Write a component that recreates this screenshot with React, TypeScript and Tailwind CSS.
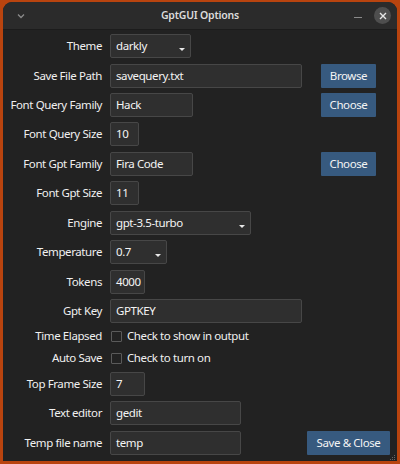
import React from "react";

type Field =
  | { kind: "entry"; value: string; w: string }
  | { kind: "combo"; value: string; w: string }
  | { kind: "check"; value: string };

type Row = {
  label: string;
  field: Field;
  button?: string;
  h: string;
  mt: string;
};

const rows: Row[] = [
  { label: "Theme", field: { kind: "combo", value: "darkly", w: "w-[81px]" }, h: "h-[24px]", mt: "mt-[4px]" },
  { label: "Save File Path", field: { kind: "entry", value: "savequery.txt", w: "w-[192px]" }, button: "Browse", h: "h-[24px]", mt: "mt-[6px]" },
  { label: "Font Query Family", field: { kind: "entry", value: "Hack", w: "w-[83px]" }, button: "Choose", h: "h-[24px]", mt: "mt-[5px]" },
  { label: "Font Query Size", field: { kind: "entry", value: "10", w: "w-[29px]" }, h: "h-[24px]", mt: "mt-[5px]" },
  { label: "Font Gpt Family", field: { kind: "entry", value: "Fira Code", w: "w-[83px]" }, button: "Choose", h: "h-[24px]", mt: "mt-[6px]" },
  { label: "Font Gpt Size", field: { kind: "entry", value: "11", w: "w-[29px]" }, h: "h-[24px]", mt: "mt-[5px]" },
  { label: "Engine", field: { kind: "combo", value: "gpt-3.5-turbo", w: "w-[141px]" }, h: "h-[24px]", mt: "mt-[6px]" },
  { label: "Temperature", field: { kind: "combo", value: "0.7", w: "w-[57px]" }, h: "h-[24px]", mt: "mt-[5px]" },
  { label: "Tokens", field: { kind: "entry", value: "4000", w: "w-[35px]" }, h: "h-[24px]", mt: "mt-[6px]" },
  { label: "Gpt Key", field: { kind: "entry", value: "GPTKEY", w: "w-[192px]" }, h: "h-[24px]", mt: "mt-[5px]" },
  { label: "Time Elapsed", field: { kind: "check", value: "Check to show in output" }, h: "h-[22px]", mt: "mt-[2px]" },
  { label: "Auto Save", field: { kind: "check", value: "Check to turn on" }, h: "h-[22px]", mt: "mt-0" },
  { label: "Top Frame Size", field: { kind: "entry", value: "7", w: "w-[35px]" }, h: "h-[24px]", mt: "mt-[3px]" },
  { label: "Text editor", field: { kind: "entry", value: "gedit", w: "w-[131px]" }, h: "h-[24px]", mt: "mt-[5px]" },
  { label: "Temp file name", field: { kind: "entry", value: "temp", w: "w-[131px]" }, button: "Save & Close", h: "h-[24px]", mt: "mt-[6px]" },
];

function FieldBox({ field }: { field: Field }) {
  if (field.kind === "check") {
    return (
      <div className="flex items-center gap-[5px] pl-[1px]">
        <div className="w-[11px] h-[11px] border border-[#5a5a5a] rounded-[1px]" />
        <span className="text-[#f0f0f0]">{field.value}</span>
      </div>
    );
  }
  return (
    <div
      className={`relative ${field.w} h-full flex items-center pl-[5px] bg-[#2f2f2f] border border-[#474747] rounded-[2px] text-[#f4f4f4]`}
    >
      {field.value}
      {field.kind === "combo" && (
        <div className="absolute right-[5px] bottom-[6px] w-0 h-0 border-l-[3px] border-r-[3px] border-t-[3px] border-l-transparent border-r-transparent border-t-[#e8e8e8]" />
      )}
    </div>
  );
}

export default function App() {
  return (
    <div className="w-[400px] h-[464px] bg-[#b9440f] pt-[2px] px-[3px] pb-[3px] font-['Noto_Sans',sans-serif] text-[11.5px] tracking-[-0.4px]">
      <div className="w-full h-full flex flex-col bg-[#222222] rounded-t-[9px] overflow-hidden">
        {/* title bar */}
        <div className="relative h-[28px] shrink-0 flex items-center justify-center bg-[#2b2b2b] border-b border-[#1c1c1c]">
          <svg className="absolute left-[13px] top-[10px]" width="10" height="8" viewBox="0 0 10 8">
            <path d="M2 2.5 L5 5.5 L8 2.5" stroke="#8a8a8a" strokeWidth="1.3" fill="none" />
          </svg>
          <span className="font-semibold text-[10.5px] tracking-[-0.2px] text-[#dcdcdc]">GptGUI Options</span>
          <div className="absolute left-[351px] top-[15px] w-[8px] h-[1px] bg-[#8a8a8a]" />
          <div className="absolute left-[371px] top-[5px] w-[17px] h-[17px] rounded-full bg-[#4e4e4e] flex items-center justify-center">
            <svg width="8" height="8" viewBox="0 0 8 8">
              <path d="M1 1 L7 7 M7 1 L1 7" stroke="#e6e6e6" strokeWidth="1.4" />
            </svg>
          </div>
        </div>

        {/* form */}
        <div className="flex flex-col">
          {rows.map((r) => (
            <div key={r.label} className={`flex items-center ${r.h} ${r.mt}`}>
              <div className="w-[99px] text-right text-[#f0f0f0] whitespace-nowrap">{r.label}</div>
              <div className="ml-[8px] w-[196px] h-full flex items-center">
                <FieldBox field={r.field} />
              </div>
              <div className="w-[85px] h-full flex justify-center">
                {r.button && (
                  <button
                    className={`h-full ${r.button === "Save & Close" ? "w-[83px]" : "w-[55px]"} bg-[#375a7f] text-[#f4f4f4] rounded-[1px]`}
                  >
                    {r.button}
                  </button>
                )}
              </div>
            </div>
          ))}
        </div>

        {/* resize grip */}
        <div className="relative flex-1">
          <div className="absolute right-[2px] bottom-[1px] grid grid-cols-3 gap-[1px]">
            <span />
            <span />
            <span className="w-[1px] h-[1px] bg-[#666]" />
            <span />
            <span className="w-[1px] h-[1px] bg-[#666]" />
            <span className="w-[1px] h-[1px] bg-[#666]" />
            <span className="w-[1px] h-[1px] bg-[#666]" />
            <span className="w-[1px] h-[1px] bg-[#666]" />
            <span className="w-[1px] h-[1px] bg-[#666]" />
          </div>
        </div>
      </div>
    </div>
  );
}
